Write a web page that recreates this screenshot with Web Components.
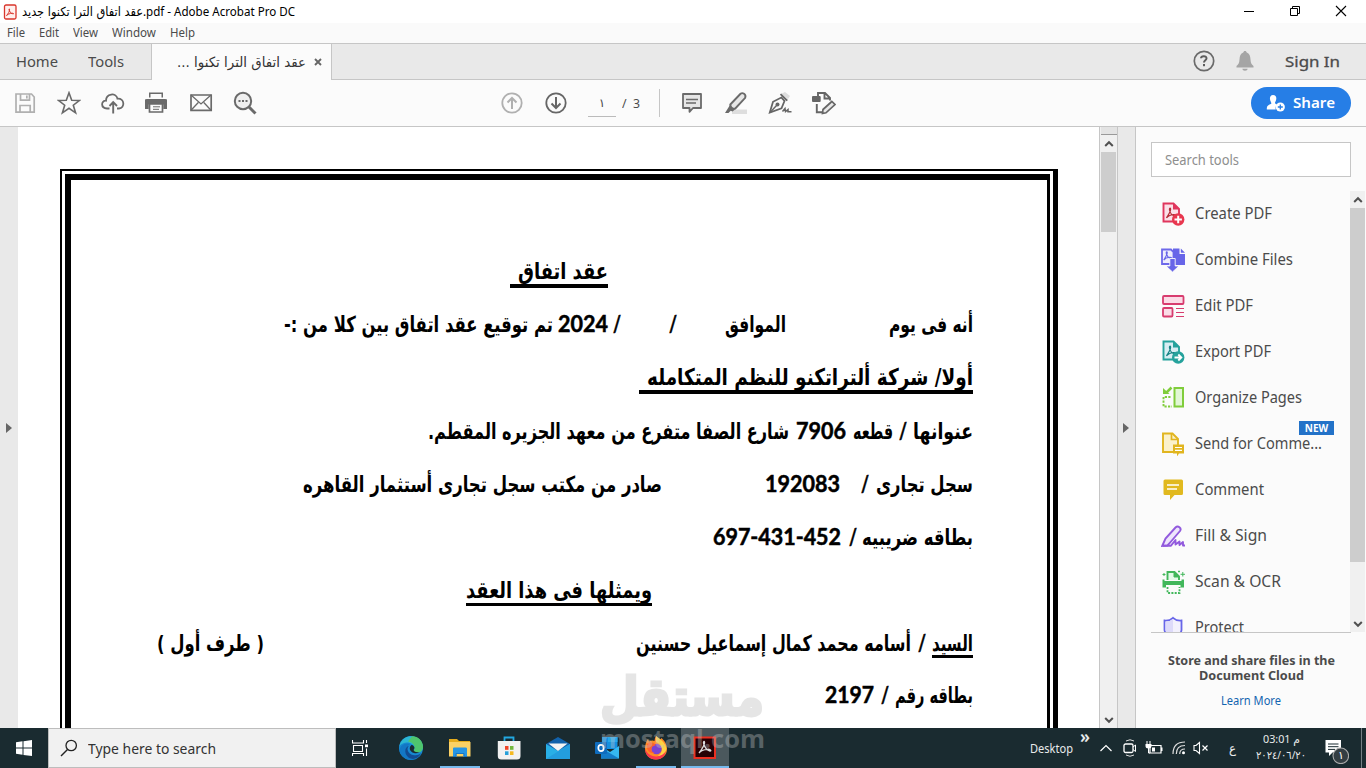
<!DOCTYPE html>
<html lang="en">
<head>
<meta charset="utf-8">
<title>Adobe Acrobat Pro DC</title>
<style>
  html, body { margin: 0; height: 100%; overflow: hidden; }
  body { font-family: "Noto Sans", "DejaVu Sans", sans-serif; color: #4b4b4b; }
</style>
</head>
<body>
<acrobat-window></acrobat-window>
<script>
(function(){
 const acro = 'M7 16C8.500 13 12 9 11 6.500C10.500 5.500 9.700 6.500 10 8C10.500 11 13 13.500 15.500 14C17.500 14 16 12.500 14 12.700C11 13 8 14.500 7 16Z';
 // [viewBox width, viewBox height, markup]
 const ICONS = {
   pdf: [16, 16, '<rect x="2.500" y="1" width="11.500" height="14" rx="1.500" fill="#fff0ee" stroke="#d9352b" stroke-width="1.300"/><path d="M4.500 11.500C6 10 8 7 7.500 5.200C7.200 4.200 6.600 5.500 7.500 7C8.500 9 10 10 11.600 9.700C11 8.600 6.500 9.500 4.500 11.500Z" fill="none" stroke="#d9352b"/>'],
   min: [12, 12, '<path d="M1 6.500H11" stroke="#000"/>'],
   restore: [12, 12, '<path d="M1.500 3.500H8.500V10.500H1.500ZM3.500 3V1.500H10.500V8.500H9" fill="none" stroke="#000"/>'],
   close: [12, 12, '<path d="M1 1L11 11M11 1L1 11" stroke="#000" stroke-width="1.100"/>'],
   cross: [8, 8, '<path d="M1 1L7 7M7 1L1 7" stroke="#666" stroke-width="1.900"/>'],
   help: [24, 24, '<circle cx="12" cy="12" r="9.700" fill="none" stroke="#6a6a6a" stroke-width="1.700"/><path d="M9 9.300C9.200 6.300 14.800 6.500 14.500 9.500C14.300 11.300 12 11.300 12 13.600" fill="none" stroke="#5c5c5c" stroke-width="2"/><rect x="11" y="15" width="2" height="2.200" fill="#5c5c5c"/>'],
   bell: [18, 22, '<path d="M9 1C10 1 10.500 1.600 10.700 2.600C13.500 3.500 14.300 6 14.500 9.500C14.700 13 15.500 14.500 17.500 16V17.500H.500V16C2.500 14.500 3.300 13 3.500 9.500C3.700 6 4.500 3.500 7.300 2.600C7.500 1.600 8 1 9 1ZM6.300 18.700H11.700C11.500 20 10.500 20.700 9 20.700S6.500 20 6.300 18.700Z" fill="#a5a5a5"/>'],
   save: [24, 24, '<g fill="none" stroke="#b0b0b0" stroke-width="1.700"><path d="M3 3H18.500L21.200 6V21.200H3Z"/><path d="M7.500 3V9.200H16.500V3M7 21V14.500H17.200V21"/></g><path d="M13 4.500H14.700V7.500H13Z" fill="#b0b0b0"/>'],
   star: [24, 24, '<path d="M12 1.800L14.700 9.200L22.600 9.400L16.300 14.200L18.600 21.900L12 17.300L5.400 21.900L7.700 14.200L1.400 9.400L9.300 9.200Z" fill="none" stroke="#6a6a6a" stroke-width="1.600"/>'],
   cloud: [24, 24, '<path d="M8.500 17.500H6C-.500 17-.200 9.500 5 9.700C5 2.500 15 1.200 16.500 7.700C23.800 7.200 24.200 17 18 17.500H16" fill="none" stroke="#6a6a6a" stroke-width="1.800"/><path d="M12.200 22.500V12M8.500 15L12.200 11.200L16 15" fill="none" stroke="#6a6a6a" stroke-width="1.900"/>'],
   print: [24, 24, '<g transform="translate(-1 -.500)"><path d="M5 2H19V7H5ZM1 10.500Q1 8.500 3 8.500H21Q23 8.500 23 10.500V18.500H19.300V14H4.700V18.500H1Z" fill="#6a6a6a"/><path d="M6.500 3.500H17.500V8.500H6.500Z" fill="#fbfbfb"/><path d="M1 9H23V13H1Z" fill="#6a6a6a"/><path d="M5.500 13.500H18.500V21.500H5.500Z" fill="#fbfbfb" stroke="#6a6a6a" stroke-width="1.700"/><path d="M9 16.300H16M9 18.800H15" stroke="#6a6a6a"/></g>'],
   mail: [24, 24, '<path d="M2 4H22.200V19.300H2Z" fill="none" stroke="#6a6a6a" stroke-width="1.700"/><path d="M2 4L12 13L22 4M2 19.300L9.300 11.500M14.800 11.500L22 19.300" fill="none" stroke="#6a6a6a" stroke-width="1.300"/>'],
   find: [24, 24, '<circle cx="10" cy="10" r="8.200" fill="#f0f0f0" stroke="#6a6a6a" stroke-width="2"/><path d="M16 16L22.500 22.500" stroke="#6a6a6a" stroke-width="3"/><path d="M5.500 9H7.500V11H5.500ZM9 9H11V11H9ZM12.500 9H14.500V11H12.500Z" fill="#6a6a6a"/>'],
   up: [24, 24, '<circle cx="12" cy="12" r="9.700" fill="none" stroke="#b0b0b0" stroke-width="1.800"/><path d="M12 18V7M7.500 11.500L12 7L16.500 11.500" fill="none" stroke="#b0b0b0" stroke-width="2"/>'],
   down: [24, 24, '<circle cx="12" cy="12" r="9.700" fill="none" stroke="#666" stroke-width="1.800"/><path d="M12 6V17M7.500 12.500L12 17L16.500 12.500" fill="none" stroke="#666" stroke-width="2"/>'],
   note: [24, 24, '<path d="M3 3H21V17H13L9.500 20.800V17H3Z" fill="#e6e6e6" stroke="#6a6a6a" stroke-width="1.800" stroke-linejoin="round"/><path d="M6 8.500H18M6 12H16" stroke="#6a6a6a" stroke-width="1.300"/>'],
   mark: [24, 24, '<path d="M8 18.500H23V23H8Z" fill="#dedede"/><path d="M6.300 13.500L16.500 2.800C18.500 1.200 22.500 3 21.200 6.800L11.300 17.500L7 17.700Z" fill="#e6e6e6" stroke="#6a6a6a" stroke-width="1.900"/><path d="M6 14L11 18.500L8.500 20.500L6.700 19.700L4.500 22H1Z" fill="#6a6a6a"/>'],
   pen: [24, 24, '<path d="M13 3L20 8L22 5L17 1Z" fill="#dedede"/><path d="M12.500 3.200L19.300 9.700M1.800 21.500L5 10.800L13.300 6.500L16.500 10L13.500 17.300Z" fill="none" stroke="#666" stroke-width="1.800"/><path d="M2 21.500L9 14" stroke="#666" stroke-width="1.400"/><circle cx="9.500" cy="13.500" r="2" fill="#666"/><path d="M14.500 20.500L17 17.500L17.500 20.500L20 18.500V20.700H23.500" fill="none" stroke="#666" stroke-width="1.500"/>'],
   convert: [24, 24, '<path d="M6 5V2H13L18 7V9.500M12.500 2V7.500H18M4.800 13V21.300H11" fill="none" stroke="#666" stroke-width="1.900"/><rect y="5" width="8.700" height="6" rx="1" fill="#666"/><path d="M11 18.500L19.800 10.500L23 13.500L14 21.800L10.500 22.500Z" fill="#e8e8e8" stroke="#666" stroke-width="1.700"/>'],
   person: [20, 18, '<path d="M7 1C9.800 1 10.700 3 10.200 5.400C10 7 9 8 9 9C9 10 10.500 10.200 11.500 10.800C9.600 12 9.300 13.700 9.800 15.500H.800C.800 11.500 2.200 11 5 10C6 9 4.200 7.500 4 5.300C3.700 3 4.500 1 7 1Z" fill="#fff"/><circle cx="14.300" cy="13" r="4.600" fill="#fff"/><path d="M14.300 10.500V15.500M11.800 13H16.800" stroke="#267ee6" stroke-width="1.300"/>'],
   create: [24, 24, '<path d="M2.500 1.500H12.500L18 7V19.500H2.500Z" fill="#fbe0e8" stroke="#e0365d" stroke-width="1.900"/><path d="M12 1L18.500 7.500H12Z" fill="#e0365d"/><path d="' + acro + '" fill="none" stroke="#b52c37" stroke-width="1.200" transform="translate(-1.500 0)"/><circle cx="17.200" cy="17.500" r="6.200" fill="#e8374f"/><path d="M17.200 13.800V21.200M13.500 17.500H20.900" stroke="#fff" stroke-width="2"/>'],
   combine: [24, 24, '<path d="M1 1.500H10L12.500 4V16H1Z" fill="#eeeefd" stroke="#6e69ea" stroke-width="1.800"/><path d="M12 .500H18.500V6H24V17H12Z" fill="#6765e8"/><path d="M19.800.500L24 4.700H19.800Z" fill="#6765e8"/><path d="' + acro + '" fill="none" stroke="#6765e8" stroke-width="1.300" transform="translate(-3.200 -1.500) scale(.85)"/><path d="M8.800 10.500H14.200V18H18L11.500 24L5 18H8.800Z" fill="#6765e8" stroke="#fbfbfb" stroke-width=".9"/>'],
   edit: [24, 24, '<g fill="#fbdce7" stroke="#d83c6f" stroke-width="1.800"><rect x="2" y="2" width="20.500" height="8" rx="1"/><rect x="2" y="14" width="9.500" height="8.500" rx="1"/></g><path d="M15 14.500H23M15 18.500H23M15 22.500H23" stroke="#d83c6f" stroke-width="1.200"/>'],
   export: [24, 24, '<path d="M2.500 1.500H12.500L18 7V19.500H2.500Z" fill="#d7edf2" stroke="#25a29c" stroke-width="1.900"/><path d="M12 1L18.500 7.500H12Z" fill="#25a29c"/><path d="' + acro + '" fill="none" stroke="#168385" stroke-width="1.200" transform="translate(-1.500 0)"/><circle cx="17.200" cy="17.500" r="6.200" fill="#25a29c"/><path d="M13.500 17.500H20M17.300 14.500L20.300 17.500L17.300 20.500" fill="none" stroke="#fff" stroke-width="1.900"/>'],
   organize: [24, 24, '<rect x="13.500" y="2" width="8.500" height="18.500" fill="#e2f7d6" stroke="#80cd3b" stroke-width="2"/><path d="M10.500 1.500L5.500 6.500" stroke="#80cd3b" stroke-width="2.500"/><path d="M2 2V8H8.500Z" fill="#80cd3b"/><path d="M9.500 11H2.500V20.500H11" fill="none" stroke="#80cd3b" stroke-width="1.900" stroke-dasharray="2.200 1.300"/>'],
   send: [24, 24, '<path d="M2 1.500H11.500L17 7V20H2Z" fill="#fbf1ca" stroke="#e1b51f" stroke-width="1.900"/><path d="M10.500 1.500V7.500H17" fill="none" stroke="#e1b51f" stroke-width="1.700"/><path d="M12 12.500H23V21.500H18L16 24.500V21.500H12Z" fill="#e1b51f"/><path d="M14 15.500H21M14 18.300H21" stroke="#fff" stroke-width="1.200"/>'],
   comment: [24, 24, '<path d="M4 1.500H20.500Q22 1.500 22 3V15.500Q22 17 20.500 17H13.500L9 22V17H4Q2.500 17 2.500 15.500V3Q2.500 1.500 4 1.500Z" fill="#e1b91f"/><path d="M6 7H18M6 11H16" stroke="#fff" stroke-width="1.500"/>'],
   sign: [24, 24, '<path d="M1.200 22L4.500 14.500L14.500 3.500C17 1 21 4.200 19 7L10 17.500L6.500 21.500Z" fill="#eee5fc" stroke="#925add" stroke-width="1.900"/><path d="M2 21.700H10L14.500 16V20.500L18.500 17.500V21L22 18V21.500H24" fill="none" stroke="#925add" stroke-width="1.900" stroke-linejoin="round"/>'],
   scan: [24, 24, '<path d="M6.500 10V2H13.500L18 6.500V10" fill="#e4fae9" stroke="#42b75b" stroke-width="1.900"/><path d="M13 2V7H18Z" fill="#42b75b" stroke="#42b75b"/><path d="M1.500 9.500H3.500V11H20.500V9.500H23V17.500H19.500V15H5V17.500H1.500Z" fill="#42b75b"/><path d="M6.500 17V23H18.500V17" fill="none" stroke="#42b75b" stroke-width="1.800" stroke-dasharray="2 1.300"/><path d="M3 3V6M1.500 4.500H4.500M21.800 2V6.500M19.500 4.300H24M18 .500V2.500M17 1.500H19" stroke="#42b75b"/>'],
   protect: [24, 24, '<path d="M3.500 4.500Q8.500 5 12 1.800Q15.500 5 20.500 4.500V14Q20 19 12 23Q4 19 3.500 14Z" fill="#f3f1fd" stroke="#6765e8" stroke-width="1.800"/><path d="M4.500 5.500Q9 5.500 12 3V22Q5 18 4.500 14Z" fill="#dddafa"/>'],
   arrowup: [10, 8, '<path d="M1.200 6L5 2.200L8.800 6" fill="none" stroke="#505050" stroke-width="2"/>'],
   arrowdown: [10, 8, '<path d="M1.200 2L5 5.800L8.800 2" fill="none" stroke="#505050" stroke-width="2"/>'],
   win: [16, 16, '<path d="M0 2.300L6.500 1.300V7.500H0ZM7.500 1.200L16 0V7.500H7.500ZM0 8.500H6.500V14.800L0 13.800ZM7.500 8.500H16V16L7.500 14.900Z" fill="#fff"/>'],
   lens: [18, 18, '<circle cx="11.200" cy="6.500" r="5.200" fill="none" stroke="#222" stroke-width="1.300"/><path d="M7.500 10.500L1 17" stroke="#222" stroke-width="1.500"/>'],
   tasks: [16, 16, '<path d="M.500 0V3H11.500V0M1.500 5.500H10.500V11.500H1.500ZM.500 16V13.500H11.500V16M14.500 0V3M14.500 8.500V16" fill="none" stroke="#fff" stroke-width="1.100"/><path d="M13 4.500H16V7.200H13Z" fill="#fff"/>'],
   edge: [24, 24, '<circle cx="12" cy="12" r="12" fill="#1689d2"/><path d="M1 8C4 0 14-2 20 3C25 7 25 14 21 16C17 17.500 14 15 15.500 13C17 9 10 5 5 7Q2 8 .300 10Z" fill="#2cb7d3"/><path d="M13 .200C20 0 24.500 6 24 12C23 17 17 17.500 14.500 15C17.500 11 14 6 9 5.500Z" fill="#55c95c" opacity=".85"/><path d="M8 11C4 17 9 23 15 23.500C9 25.500 2 21 .500 15C.500 9 7 6 11 8Q9 9 8 11Z" fill="#1377c5"/><path d="M10.500 9.500C6.500 12 9 18 14 19C18 20 21 18 22.300 17C20 22 15 24 11.500 22.500C5.500 20.500 4 11 10.500 9.500Z" fill="#124b92"/><path d="M12.500 9C9.500 11 10.500 16 15 17C17 17.500 19 17 20.500 16.300C16 16.500 13.500 15 15.300 12.500C16 11 14 9 12.500 9Z" fill="#1a2b30"/>'],
   folder: [24, 24, '<path d="M1 3H9L11 5H22V20H1Z" fill="#e6ac1c"/><path d="M1 6H22.500V20.500H1Z" fill="#fbd165"/><path d="M5 12.500Q5 11.500 6 11.500H17.500Q19 11.500 19 12.500V21H15.500V17H8.500V21H5Z" fill="#2795e3"/><path d="M5 20.500H8V17.500H16V20.500H19" fill="none" stroke="#1976c4" stroke-width="1"/>'],
   store: [24, 24, '<path d="M7.500 6V1.500H16.500V6" fill="none" stroke="#22a8e0" stroke-width="1.800"/><path d="M.800 5H23.500V20Q23.500 23.500 20 23.500H4.300Q.800 23.500.800 20Z" fill="#f1f1f1"/><path d="M8 10H11.500V13.800H8Z" fill="#ef4428"/><path d="M13 10H16.500V13.800H13Z" fill="#73b83d"/><path d="M8 15.300H11.500V19H8Z" fill="#26a0da"/><path d="M13 15.300H16.500V19H13Z" fill="#f5b91f"/>'],
   mailapp: [24, 24, '<path d="M0 8L12 1L24 8V23H0Z" fill="#1262ab"/><path d="M0 8L12 15L24 8V23H0Z" fill="#29afe6"/><path d="M2.500 7.500H21.500L12 15Z" fill="#f4f4f4"/><path d="M24 8V23H0Z" fill="#2091d8" opacity=".6"/>'],
   outlook: [24, 24, '<path d="M7 1H22.500V13H7Z" fill="#1490df"/><path d="M13 1H22.500V6H13Z" fill="#28a8ea"/><path d="M6 10L15 16L24 10V22.500H6Z" fill="#35b8f1"/><path d="M6 12L24 22.500H6Z" fill="#147cc9"/><rect y="6" width="12" height="12" rx="1" fill="#0f6cbd"/><ellipse cx="6" cy="12" rx="2.700" ry="3.200" fill="none" stroke="#fff" stroke-width="1.700"/>'],
   firefox: [24, 24, '<path d="M12 0Q15 3 15.500 4.500L17.500 2Q23 7 23 13C23 19 18 23.500 12 23.500C5.500 23.500 1 19 1 12.500C1 9 2 5.500 4 3L5 5.500Q8 4 10.500 5Q10.500 2 12 0Z" fill="#ff8b25"/><path d="M12 0Q21 6 22.500 12C22 18 18 21 14 20C21 15 17 8 12 6Z" fill="#ffd343"/><path d="M1 12C2 17 7 21 13 20.500C17 20 20 18 22 15C21 20 17 23.500 12 23.500C5.500 23.500 1 19 1 12Z" fill="#f9364d"/><circle cx="12.500" cy="13" r="5.200" fill="#7b42d3"/><path d="M5 6Q9 6 12 9L8.500 10.500C7 12 6 16 11 17C6 18 2 14 3 9Z" fill="#ff602e"/>'],
   acrobat: [24, 24, '<rect x="1.500" y="1.500" width="20.500" height="20.500" fill="#260105" stroke="#ec3022" stroke-width="2"/><path d="M6 17C8.500 14 12.200 8 11.500 6C11 4.500 10 6 10.700 8C12 12 14.500 14.500 17 15C19 15 17 13 14.500 13.300C11 13.500 7.500 15 6 17Z" fill="none" stroke="#ddd" stroke-width="1.300"/>'],
   chevron: [12, 8, '<path d="M.500 7L6 1.500L11.500 7" fill="none" stroke="#fff" stroke-width="1.200"/>'],
   meet: [14, 18, '<path d="M3 2Q7-.500 11 2M3 16Q7 18.500 11 16" fill="none" stroke="#ddd"/><rect x="1" y="5" width="9" height="8.500" rx="1.500" fill="none" stroke="#fff" stroke-width="1.300"/><path d="M10 8L12.500 6V12.500L10 10.500" fill="none" stroke="#fff"/>'],
   battery: [18, 14, '<path d="M5 4.500H16V12H5Z" fill="none" stroke="#fff" stroke-width="1.200"/><path d="M7 6.500H10V10.500H7ZM16 6.500H17.500V10H16Z" fill="#fff"/><path d="M2 0V3M5 0V3" stroke="#fff"/><path d="M.500 3H6.500V5Q6.500 7.500 3.500 7.500T.500 5Z" fill="#fff"/><path d="M3.500 7V12H5" fill="none" stroke="#fff"/>'],
   wifi: [14, 14, '<path d="M1 13Q1 1 13 1M4.300 13Q4.300 4.500 13 4.500M7.700 13Q7.700 8 13 8" fill="none" stroke="#ddd" stroke-width="1.200"/><circle cx="11.500" cy="11.800" r="1.500" fill="#fff"/>'],
   mute: [16, 14, '<path d="M1 4.500H3L6.500 1.500V12.500L3 9.500H1Z" fill="none" stroke="#fff" stroke-width="1.100"/><path d="M9.500 4.500L14.500 9.500M14.500 4.500L9.500 9.500" stroke="#fff" stroke-width="1.200"/>'],
   notice: [24, 24, '<path d="M.500 0H16V12.500H7.500L4 16V12.500H.500Z" fill="#fff"/><path d="M3 4H13.500M3 6.700H13.500M3 9.400H10" stroke="#1a2b30"/><circle cx="15.800" cy="15.800" r="7.800" fill="#343e43" stroke="#aaa" stroke-width="1.100"/>']
 };

 class SvgIcon extends HTMLElement {
   connectedCallback() {
     if (this.shadowRoot) return;
     const [w, h, body] = ICONS[this.getAttribute('name')];
     this.attachShadow({mode:'open'}).innerHTML = `
       <style>:host { display: block; flex: none; width: ${w}px; height: ${h}px; } svg { display: block; }</style>
       <svg width="${w}" height="${h}" viewBox="0 0 ${w} ${h}">${body}</svg>
     `;
   }
 }

 // one line of text squeezed or stretched to the width given in w
 class FitText extends HTMLElement {
   connectedCallback() {
     if (this.shadowRoot) return;
     const w = +this.getAttribute('w');
     this.attachShadow({mode:'open'}).innerHTML = `
       <style>
         :host { display: inline-block; flex: none; width: ${w}px; direction: ltr; }
         span { display: inline-block; white-space: nowrap; transform-origin: 0 50%; }
       </style>
       <span><slot></slot></span>
     `;
     const span = this.shadowRoot.querySelector('span');
     const real = span.getBoundingClientRect().width;
     span.style.marginRight = (w - real) + 'px';
     if (real) span.style.transform = 'scaleX(' + w / real + ')';
   }
 }

 class TitleBar extends HTMLElement {
   connectedCallback() {
     this.attachShadow({mode:'open'}).innerHTML = `
       <style>
         :host { display: block; height: 43px; background: #fafafa; }
         .title { display: flex; align-items: center; height: 23px; background: #fff; color: #000; font-size: 12px; line-height: 20px; padding-left: 2px; }
         .ar { margin-left: 4px; font: 12.500px/20px "DejaVu Sans", sans-serif; }
         .buttons { margin-left: auto; display: flex; gap: 34px; padding: 0 19px 2px 0; }
         .menu { display: flex; height: 20px; line-height: 20px; font-size: 12px; padding-left: 7px; }
         .menu > * + * { margin-left: 14px; }
       </style>
       <div class="title">
         <svg-icon name="pdf"></svg-icon>
         <fit-text class="ar" w="121">عقد اتفاق الترا تكنوا جديد</fit-text>
         <fit-text w="152">.pdf - Adobe Acrobat Pro DC</fit-text>
         <div class="buttons"><svg-icon name="min"></svg-icon><svg-icon name="restore"></svg-icon><svg-icon name="close"></svg-icon></div>
       </div>
       <div class="menu"><fit-text w="18">File</fit-text><fit-text w="20">Edit</fit-text><fit-text w="25">View</fit-text><fit-text w="44">Window</fit-text><fit-text w="25">Help</fit-text></div>
     `;
   }
 }

 class TabBar extends HTMLElement {
   connectedCallback() {
     this.attachShadow({mode:'open'}).innerHTML = `
       <style>
         :host { display: flex; box-sizing: border-box; height: 37px; border-top: 1px solid #c6c6c6; background: #e9e9e9; font-size: 15px; line-height: 35px; }
         div { box-sizing: border-box; border-bottom: 1px solid #c6c6c6; display: flex; }
         .nav { width: 151px; padding-left: 16px; gap: 30px; }
         .tab { width: 181px; border: solid #c6c6c6; border-width: 0 1px; background: #fbfbfb; padding-left: 25px; color: #333; gap: 8px; align-items: center; }
         .name { font: 14px/35px "DejaVu Sans", sans-serif; }
         .rest { flex: 1; align-items: center; justify-content: flex-end; padding-right: 26px; }
         .rest svg-icon { margin-top: -1px; }
         .rest .bell { margin: -1px 31px 0 20px; }
         .sign { -webkit-text-stroke: .3px; margin-top: -1px; }
       </style>
       <div class="nav"><fit-text w="42">Home</fit-text><fit-text w="36">Tools</fit-text></div>
       <div class="tab"><fit-text class="name" w="129"><bdi dir="rtl">عقد اتفاق الترا تكنوا ...</bdi></fit-text><svg-icon name="cross"></svg-icon></div>
       <div class="rest"><svg-icon name="help"></svg-icon><svg-icon class="bell" name="bell"></svg-icon><fit-text class="sign" w="55">Sign In</fit-text></div>
     `;
   }
 }

 class ToolBar extends HTMLElement {
   connectedCallback() {
     const icons = names => names.map(n => `<svg-icon name="${n}"></svg-icon>`).join('');
     this.attachShadow({mode:'open'}).innerHTML = `
       <style>
         :host { display: flex; align-items: center; box-sizing: border-box; height: 47px; padding: 0 15px 0 13px; border-bottom: 1px solid #c6c6c6; background: #fbfbfb; font-size: 12px; }
         .group { display: flex; gap: 20px; }
         .pager { margin-left: 243px; }
         .field { width: 28px; height: 26px; line-height: 26px; margin: 1px 6px 0 20px; border-bottom: 1px solid #bbb; text-align: center; font-family: "DejaVu Sans", sans-serif; }
         .line { width: 1px; height: 28px; margin: 0 20px 0 19px; background: #c6c6c6; }
         .share { display: flex; align-items: center; gap: 7px; box-sizing: border-box; width: 100px; height: 32px; margin-left: auto; padding-left: 15px; border-radius: 16px; background: #267ee6; color: #fff; font-size: 15px; font-weight: 600; }
         .share fit-text { margin-top: -2px; }
       </style>
       <div class="group">${icons(['save', 'star', 'cloud', 'print', 'mail', 'find'])}</div>
       <div class="group pager">${icons(['up', 'down'])}</div>
       <div class="field">١</div>
       <fit-text w="18">/&nbsp; 3</fit-text>
       <div class="line"></div>
       <div class="group">${icons(['note', 'mark', 'pen', 'convert'])}</div>
       <div class="share"><svg-icon name="person"></svg-icon><fit-text w="42">Share</fit-text></div>
     `;
   }
 }

 class ScrollBar extends HTMLElement {
   connectedCallback() {
     this.attachShadow({mode:'open'}).innerHTML = `
       <style>
         :host { display: flex; flex-direction: column; align-items: center; width: 15px; background: #f0f0f0; }
         .thumb { width: 15px; height: ${this.getAttribute('thumb')}px; background: #cdcdcd; }
         svg-icon { margin: 5px 0 4px; }
         .last { margin-top: auto; }
       </style>
       <svg-icon name="arrowup"></svg-icon>
       <div class="thumb"></div>
       <svg-icon class="last" name="arrowdown"></svg-icon>
     `;
   }
 }

 // a segment is [text, width, gap before it, class, underline tail]; lines run from the right margin
 const LINES = [
   {cls: 'head center', segs: [['عقد اتفاق', 90, 0, 'u wide', 8]]},
   {segs: [['أنه فى يوم', 84, 0], ['الموافق', 61, 103], ['/', 8, 48, 'n'], ['/', 8, 48, 'n'], ['2024', 50, 5, 'n'], ['تم توقيع عقد اتفاق بين كلا من :-', 269, 5]]},
   {cls: 'head', segs: [['أولا/ شركة ألتراتكنو للنظم المتكامله', 326, 0, 'u wide', 8]]},
   {segs: [['عنوانها', 60, 0], ['/', 8, 6, 'n'], ['قطعه', 40, 6], ['7906', 50, 7, 'n'], ['شارع الصفا متفرع من معهد الجزيره المقطم.', 361, 7]]},
   {segs: [['سجل تجارى', 97, 0], ['/', 8, 7, 'n'], ['192083', 75, 21, 'n'], ['صادر من مكتب سجل تجارى أستثمار القاهره', 359, 103]]},
   {segs: [['بطاقه ضريبيه', 111, 0], ['/', 8, 5, 'n'], ['697-431-452', 128, 8, 'n']]},
   {cls: 'head center', segs: [['ويمثلها فى هذا العقد', 186, 0, 'u']]},
   {segs: [['السيد', 41, 0, 'u'], ['/', 8, 6, 'n'], ['أسامه محمد كمال إسماعيل حسنين', 275, 7], ['( طرف أول )', 107, 372]]},
   {segs: [['بطاقه رقم', 78, 0], ['/', 8, 6, 'n'], ['2197', 49, 7, 'n']]}
 ];

 class PdfPage extends HTMLElement {
   connectedCallback() {
     const rows = LINES.map(l => `<div class="row ${l.cls || ''}">` + l.segs.map(([t, w, gap, cls, tail]) =>
       `<span class="${cls || ''}" style="margin-right:${gap}px;padding-left:${tail || 0}px"><fit-text w="${w}"><bdi dir="rtl">${t}</bdi></fit-text></span>`).join('') + '</div>').join('');
     this.attachShadow({mode:'open'}).innerHTML = `
       <style>
         :host { display: block; box-sizing: border-box; width: 1081px; background: #fff; padding: 42px 41px 0 42px; overflow: hidden; color: #000; }
         .outer { box-sizing: border-box; height: 600px; border: solid #000; border-width: 2px 5px 0 2px; padding: 3px 3px 0; }
         .inner { box-sizing: border-box; height: 600px; border: solid #000; border-width: 6px 3px 0 6px; padding: 64px 74px 0 86px; }
         .row { box-sizing: border-box; display: flex; direction: rtl; align-items: baseline; height: 53.200px; font: bold 22px/53px "DejaVu Sans", sans-serif; }
         .head { padding-top: 18px; font-size: 23px; }
         .center { justify-content: center; padding-right: 12px; }
         .row:last-child { margin-top: -2px; }
         span { display: inline-block; }
         .u, .u fit-text { line-height: 22px; }
         .u { height: 22px; border-bottom: 3px solid #000; }
         /* pull heading glyphs off their rule */
         .head .u, .head .u fit-text { line-height: 18px; }
         .wide { border-bottom-width: 4px; }
         .n { font-family: Lato, sans-serif; font-size: 22px; font-weight: 700; -webkit-text-stroke: .5px #000; }
       </style>
       <div class="outer"><div class="inner">${rows}</div></div>
     `;
   }
 }

 const TOOLS = [
   ['create', 'Create PDF', 77], ['combine', 'Combine Files', 98], ['edit', 'Edit PDF', 58],
   ['export', 'Export PDF', 76], ['organize', 'Organize Pages', 107], ['send', 'Send for Comme...', 127],
   ['comment', 'Comment', 69], ['sign', 'Fill & Sign', 72], ['scan', 'Scan & OCR', 86], ['protect', 'Protect', 49]
 ];

 class ToolsPanel extends HTMLElement {
   connectedCallback() {
     this.attachShadow({mode:'open'}).innerHTML = `
       <style>
         :host { display: block; width: 230px; background: #fbfbfb; }
         .search { box-sizing: border-box; width: 200px; height: 35px; margin: 15px 0 14px 15px; padding-left: 13px; border: 1px solid #c6c6c6; background: #fff; color: #8e8e8e; font-size: 13.500px; line-height: 34px; }
         .body { display: flex; height: 441px; }
         .list { box-sizing: border-box; width: 200px; height: 442px; margin: 0 -1px 0 15px; border-bottom: 1px solid #c6c6c6; overflow: hidden; }
         scroll-bar { position: relative; }
         .item { position: relative; display: flex; align-items: center; gap: 10px; height: 46px; padding-left: 10px; font-size: 15.500px; line-height: 20px; }
         .item fit-text { margin-top: -2px; }
         .badge { position: absolute; left: 148px; top: 0; width: 35px; height: 14px; background: #2372c8; color: #fff; font-size: 10px; font-weight: bold; line-height: 14px; text-align: center; }
         .foot { width: 200px; margin: 21px 0 0 15px; text-align: center; font-size: 12px; line-height: 15px; font-weight: bold; }
         .foot fit-text { display: block; margin: 0 auto; }
         .more { margin: 10px 0 0; color: #1264b0; font-weight: normal; }
       </style>
       <div class="search"><fit-text w="74">Search tools</fit-text></div>
       <div class="body">
         <div class="list">${TOOLS.map(([icon, name, w]) => `<div class="item"><svg-icon name="${icon}"></svg-icon><fit-text w="${w}">${name.replace('&', '&amp;')}</fit-text>${icon === 'send' ? '<div class="badge">NEW</div>' : ''}</div>`).join('')}</div>
         <scroll-bar thumb="354"></scroll-bar>
       </div>
       <div class="foot">
         <fit-text w="167">Store and share files in the</fit-text>
         <fit-text w="105">Document Cloud</fit-text>
         <div class="more"><fit-text w="60">Learn More</fit-text></div>
       </div>
     `;
   }
 }

 class TaskBar extends HTMLElement {
   connectedCallback() {
     const apps = [['edge'], ['folder', 'open'], ['store'], ['mailapp'], ['outlook'], ['firefox', 'open'], ['acrobat', 'open active']];
     this.attachShadow({mode:'open'}).innerHTML = `
       <style>
         :host { display: flex; height: 40px; background: #1a2b30; color: #e8eaeb; font-size: 12px; }
         .cell { display: flex; align-items: center; justify-content: center; box-sizing: border-box; width: 48px; height: 40px; }
         .search { display: flex; align-items: center; gap: 10px; box-sizing: border-box; width: 288px; border: 1px solid #bdbdbd; background: #f1f1f1; color: #333; padding-left: 11px; font-size: 14.500px; }
         .apps { display: flex; gap: 1px; margin-left: 3px; }
         .open { position: relative; }
         .open::after { content: ""; position: absolute; left: 4px; right: 4px; bottom: 0; height: 2px; background: #76b9ed; }
         .active { background: #4b585d; }
         .active::after { left: 0; right: 0; }
         .tray { display: flex; align-items: center; margin-left: auto; }
         .more { margin: -22px 10px 0 7px; font-size: 17px; line-height: 20px; font-weight: 600; }
         .clock { display: grid; justify-items: center; width: 50px; font-size: 11.500px; line-height: 16px; font-family: "Noto Sans", "DejaVu Sans", sans-serif; margin: -2px 19px 0 20px; }
         .date { font-size: 11px; }
         .notice { position: relative; margin-top: 7px; }
         .notice b { position: absolute; left: 12px; top: 7px; width: 8px; text-align: center; font: 11px/18px "DejaVu Sans", sans-serif; color: #fff; }
         .edge { width: 1px; height: 40px; margin: 0 4px 0 12px; background: #748085; }
         .ain { font: 13px "DejaVu Sans", sans-serif; margin-left: 20px; }
       </style>
       <div class="cell"><svg-icon name="win"></svg-icon></div>
       <div class="search"><svg-icon name="lens"></svg-icon><fit-text w="128">Type here to search</fit-text></div>
       <div class="cell"><svg-icon name="tasks"></svg-icon></div>
       <div class="apps">${apps.map(([n, c]) => `<div class="cell ${c || ''}"><svg-icon name="${n}"></svg-icon></div>`).join('')}</div>
       <div class="tray">
         <fit-text w="43">Desktop</fit-text>
         <fit-text class="more" w="10">»</fit-text>
         <svg-icon name="chevron"></svg-icon>
         <svg-icon name="meet" style="margin-left:11px"></svg-icon>
         <svg-icon name="battery" style="margin-left:8px"></svg-icon>
         <svg-icon name="wifi" style="margin-left:9px"></svg-icon>
         <svg-icon name="mute" style="margin-left:7px"></svg-icon>
         <fit-text class="ain" w="7">ع</fit-text>
         <div class="clock"><fit-text w="37">03:01 م</fit-text><fit-text class="date" w="50">٢٠٢٤/٠٦/٢٠</fit-text></div>
         <div class="notice"><svg-icon name="notice"></svg-icon><b>١</b></div>
         <div class="edge"></div>
       </div>
     `;
   }
 }

 class WaterMark extends HTMLElement {
   connectedCallback() {
     this.attachShadow({mode:'open'}).innerHTML = `
       <style>
         :host { position: absolute; left: 600px; top: 674px; width: 166px; height: 84px; }
         .ar { display: block; height: 48px; font: bold 52px/46px "DejaVu Sans", sans-serif; color: #808080; opacity: .2; -webkit-text-stroke: 3px #808080; }
         .en { display: block; height: 32px; font: bold 25px/32px "Open Sans", sans-serif; color: #c8c8c8; opacity: .35; }
       </style>
       <fit-text class="ar" w="164">مستقل</fit-text>
       <fit-text class="en" w="165">mostaql.com</fit-text>
     `;
   }
 }

 class AcrobatWindow extends HTMLElement {
   connectedCallback() {
     this.attachShadow({mode:'open'}).innerHTML = `
       <style>
         :host { display: flex; flex-direction: column; position: relative; width: 1366px; height: 768px; overflow: hidden; }
         .main { display: flex; height: 601px; background: #e9e9e9; }
         .rail { box-sizing: border-box; width: 18px; display: flex; align-items: center; padding-left: 6px; }
         .rail::before { content: ""; border: solid transparent; border-width: 5px 0 5px 6px; border-left-color: #666; }
         .right { padding-left: 5px; border-right: 1px solid #c6c6c6; }
         .scroll { box-sizing: border-box; display: flex; flex-direction: column; width: 19px; padding-left: 1px; border: solid #c6c6c6; border-width: 0 1px; background: #f0f0f0; }
         .split { height: 7px; width: 16px; border-bottom: 1px solid #999; background: #e3e3e3; }
         scroll-bar { flex: 1; }
       </style>
       <title-bar></title-bar>
       <tab-bar></tab-bar>
       <tool-bar></tool-bar>
       <div class="main">
         <div class="rail"></div>
         <pdf-page></pdf-page>
         <div class="scroll"><div class="split"></div><scroll-bar thumb="80"></scroll-bar></div>
         <div class="rail right"></div>
         <tools-panel></tools-panel>
       </div>
       <task-bar></task-bar>
       <water-mark></water-mark>
     `;
   }
 }

 customElements.define('acrobat-window', AcrobatWindow);
 customElements.define('title-bar', TitleBar);
 customElements.define('tab-bar', TabBar);
 customElements.define('tool-bar', ToolBar);
 customElements.define('scroll-bar', ScrollBar);
 customElements.define('pdf-page', PdfPage);
 customElements.define('tools-panel', ToolsPanel);
 customElements.define('task-bar', TaskBar);
 customElements.define('water-mark', WaterMark);
 customElements.define('svg-icon', SvgIcon);
 customElements.define('fit-text', FitText);
})();
</script>
</body>
</html>
